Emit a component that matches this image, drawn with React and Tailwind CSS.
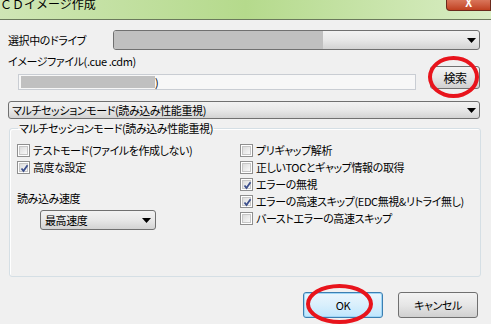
import React from 'react';

const font = "font-['Noto_Sans_CJK_JP','Noto_Sans',sans-serif] [font-feature-settings:'palt'] tracking-[-0.4px]";

const Arrow = () => (
    <svg width="9" height="5" viewBox="0 0 9 5" className="shrink-0">
        <path d="M0 0 H9 L4.5 5 Z" fill="#000" />
    </svg>
);

const Check = ({ checked }) => (
    <span className="w-[13px] h-[13px] shrink-0 border border-[#8f8f8f] bg-white p-[1px]">
        <span className="relative block w-full h-full border border-[#c6c6c6] bg-gradient-to-br from-[#dcdcdc] to-[#f9f9f9]">
            {checked && (
                <svg width="9" height="9" viewBox="0 0 9 9" className="absolute left-0 top-0">
                    <path d="M1.5 4.5 L3.5 7 L7.5 1.2" stroke="#3c4f8c" strokeWidth="1.8" fill="none" />
                </svg>
            )}
        </span>
    </span>
);

const CheckRow = ({ checked, label }) => (
    <div className="flex items-center gap-[3px] h-[17px] whitespace-nowrap">
        <Check checked={checked} />
        <span className="leading-none">{label}</span>
    </div>
);

const App = () => {
    return (
        <div className={`relative w-[491px] h-[324px] overflow-hidden bg-[#f0f0f0] text-[11px] text-black ${font}`}>

            {/* Title bar */}
            <div className="flex justify-between h-[20px] border-b border-[#6b7a5c] bg-gradient-to-r from-[#cfe6b5] via-[#b5da8c] to-[#d9edc4]">
                <span className="text-[12px] leading-none -mt-[2px] tracking-normal [font-feature-settings:normal] whitespace-nowrap">ＣＤイメージ作成</span>
                <div className="w-[45px] h-[11px] rounded-bl-[4px] border border-t-0 border-[#6a2a1c] bg-gradient-to-b from-[#d9755a] to-[#c0401f] flex justify-center overflow-hidden">
                    <span className="text-white font-bold text-[11px] leading-none -mt-[3px]">X</span>
                </div>
            </div>

            <div className="px-[8px]">
                {/* Drive */}
                <div className="flex items-center mt-[10px]">
                    <span className="w-[105px] leading-none whitespace-nowrap">選択中のドライブ</span>
                    <div className="flex-1 mr-[3px] h-[20px] rounded-[3px] border border-[#707070] bg-gradient-to-b from-[#f2f2f2] via-[#e8e8e8] to-[#d3d3d3] flex items-center">
                        <div className="w-[209px] h-full bg-[#c0c0c0] rounded-l-[2px]"></div>
                        <div className="flex-1"></div>
                        <div className="mr-[3px]"><Arrow /></div>
                    </div>
                </div>

                {/* Image file */}
                <div className="flex items-end mt-[6px]">
                    <div className="flex-1">
                        <div className="leading-none">イメージファイル(.cue .cdm)</div>
                        <div className="ml-[10px] mt-[7px] w-[398px] h-[16px] border border-[#c9cdd3] bg-[#f7f7f7] flex items-center pl-[2px]">
                            <div className="w-[134px] h-[12px] bg-[#c0c0c0]"></div>
                            <span className="leading-none">)</span>
                        </div>
                    </div>
                    <button className="w-[50px] h-[23px] mr-[3px] mb-[1px] rounded-[3px] border border-[#707070] bg-gradient-to-b from-[#f3f3f3] via-[#e6e6e6] to-[#d0d0d0] leading-none text-[12px]">
                        検索
                    </button>
                </div>

                {/* Mode combo */}
                <div className="mt-[11px] mr-[3px] h-[18px] rounded-[3px] border border-[#707070] bg-gradient-to-b from-[#f2f2f2] via-[#e8e8e8] to-[#d3d3d3] flex items-center justify-between px-[3px]">
                    <span className="leading-none">マルチセッションモード(読み込み性能重視)</span>
                    <Arrow />
                </div>

                {/* Group box */}
                <fieldset className="mt-[2px] ml-[1px] mr-[2px] h-[156px] rounded-[3px] border border-[#d5dfe5] shadow-[inset_1px_1px_0_#fff] px-[7px]">
                    <legend className="ml-[1px] px-[1px] leading-[14px]">マルチセッションモード(読み込み性能重視)</legend>
                    <div className="flex mt-[7px]">
                        <div className="w-[223px] shrink-0">
                            <CheckRow label="テストモード(ファイルを作成しない)" />
                            <CheckRow checked label="高度な設定" />
                            <div className="mt-[17px] leading-none">読み込み速度</div>
                            <div className="ml-[23px] mt-[6px] w-[116px] h-[20px] rounded-[3px] border border-[#707070] bg-gradient-to-b from-[#f2f2f2] via-[#e8e8e8] to-[#d3d3d3] flex items-center justify-between px-[4px]">
                                <span className="leading-none">最高速度</span>
                                <Arrow />
                            </div>
                        </div>
                        <div>
                            <CheckRow label="プリギャップ解析" />
                            <CheckRow label="正しいTOCとギャップ情報の取得" />
                            <CheckRow checked label="エラーの無視" />
                            <CheckRow checked label="エラーの高速スキップ(EDC無視&リトライ無し)" />
                            <CheckRow label="バーストエラーの高速スキップ" />
                        </div>
                    </div>
                </fieldset>

                {/* Buttons */}
                <div className="flex justify-end gap-[15px] mt-[15px] mr-[5px]">
                    <button className="w-[80px] h-[26px] rounded-[3px] border border-[#3c7fb1] bg-gradient-to-b from-[#eaf6fd] via-[#d9effc] to-[#bee6fd] shadow-[inset_0_0_0_1px_#9fd6f7] leading-none">
                        OK
                    </button>
                    <button className="w-[80px] h-[26px] rounded-[3px] border border-[#707070] bg-gradient-to-b from-[#f3f3f3] via-[#e6e6e6] to-[#d0d0d0] leading-none">
                        キャンセル
                    </button>
                </div>
            </div>

            {/* Red annotation circles */}
            <div className="absolute left-[428px] top-[56px] w-[51px] h-[42px] rounded-[50%] border-[4px] border-[#e8141c]"></div>
            <div className="absolute left-[306px] top-[284px] w-[67px] h-[40px] rounded-[50%] border-[4px] border-[#e8141c]"></div>
        </div>
    );
};

export default App;
